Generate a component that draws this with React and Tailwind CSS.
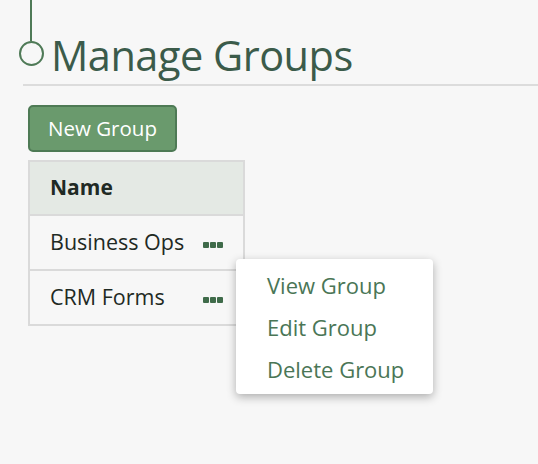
import React from "react";

const groups = ["Business Ops", "CRM Forms"];

function Dots() {
  return (
    <span className="mt-[4px] flex items-center gap-[1px]">
      <span className="h-[6px] w-[6px] rounded-[1px] bg-[#3f6b4a]" />
      <span className="h-[6px] w-[6px] rounded-[1px] bg-[#3f6b4a]" />
      <span className="h-[6px] w-[6px] rounded-[1px] bg-[#3f6b4a]" />
    </span>
  );
}

export default function App() {
  return (
    <div
      className="relative h-[464px] w-[538px] overflow-hidden bg-[#f7f7f7]"
      style={{ fontFamily: '"Open Sans", "Noto Sans", sans-serif' }}
    >
      {/* Title with timeline marker */}
      <div className="flex">
        <div className="ml-[18px] flex w-[26px] flex-col items-center">
          <div className="h-[41px] w-[2px] bg-[#4f7a57]" />
          <div className="h-[25px] w-[25px] rounded-full border-2 border-[#4f7a57]" />
        </div>
        <h1 className="ml-[7px] mt-[29px] text-[41.5px] leading-[52px] tracking-[-0.5px] text-[#3b5b4a]">
          Manage Groups
        </h1>
      </div>
      <div className="ml-[23px] mt-[3px] h-[2px] bg-[#dcdcdc]" />

      <div className="ml-[28px] mt-[19px]">
        <button className="flex h-[47px] w-[149px] items-center justify-center rounded-[5px] border-2 border-[#4e7a55] bg-[#6a9a6d] text-[20.5px] text-white">
          New Group
        </button>

        {/* Groups table */}
        <div className="mt-[8px] w-[217px] border-2 border-[#dadada]">
          <div className="flex h-[52px] items-center bg-[#e4e9e4] pl-[20px] text-[21px] font-bold text-[#1f2a24]">
            Name
          </div>
          {groups.map((g) => (
            <div
              key={g}
              className="flex h-[55px] items-center justify-between border-t-2 border-[#dadada] pl-[20px] pr-[20px] text-[21.5px] text-[#1f2a24]"
            >
              <span>{g}</span>
              <Dots />
            </div>
          ))}
        </div>
      </div>

      {/* Context menu */}
      <div className="absolute left-[236px] top-[259px] flex w-[197px] flex-col rounded-[4px] bg-white pl-[31px] pt-[5px] pb-[4px] text-[22px] text-[#4a7656] shadow-[0_3px_10px_rgba(0,0,0,0.3)]">
        <span className="leading-[42px]">View Group</span>
        <span className="leading-[42px]">Edit Group</span>
        <span className="leading-[42px]">Delete Group</span>
      </div>
    </div>
  );
}
